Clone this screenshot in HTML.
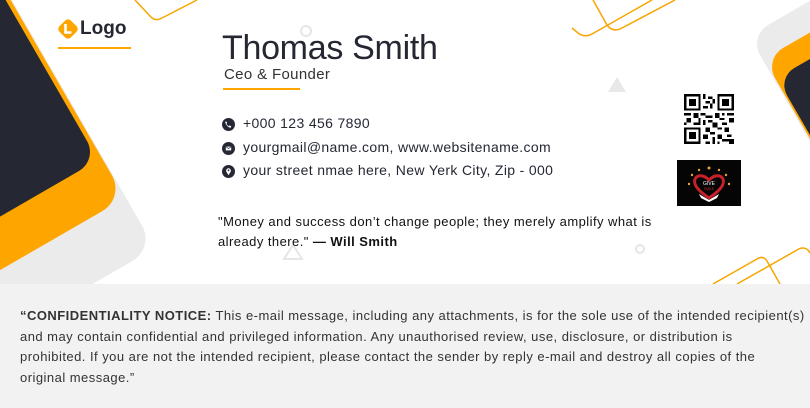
<!DOCTYPE html>
<html><head><meta charset="utf-8"><style>
html,body{margin:0;padding:0;width:810px;height:408px;overflow:hidden;}
body{position:relative;background:#fff;font-family:"Liberation Sans",sans-serif;color:#252733;}
.abs{position:absolute;white-space:nowrap;}
#footer{position:absolute;left:0;top:284px;width:810px;height:124px;background:#f2f2f2;overflow:hidden;}
#footer p{position:absolute;left:20px;top:22px;margin:0;font-size:13px;line-height:20.6px;color:#333;white-space:nowrap;letter-spacing:0.47px;}
.ic{position:absolute;width:13px;height:13px;border-radius:50%;background:#252733;}
</style></head><body>
<svg class="abs" style="left:0;top:0" width="810" height="284">
 <g transform="translate(155,248) rotate(-30)"><rect x="-420" y="-420" width="420" height="420" rx="26" fill="#ebebeb"/></g>
 <g transform="translate(125,198) rotate(-30)"><rect x="-420" y="-420" width="420" height="420" rx="26" fill="#fea500"/></g>
 <g transform="translate(98,160) rotate(-30)"><rect x="-420" y="-420" width="420" height="420" rx="22" fill="#252733"/></g>
 <g transform="translate(749,36) rotate(-30)"><rect x="0" y="0" width="300" height="300" rx="22" fill="#ebebeb"/></g>
 <g transform="translate(764,59) rotate(-30)"><rect x="0" y="0" width="300" height="300" rx="22" fill="#fea500"/></g>
 <g transform="translate(777,78) rotate(-30)"><rect x="0" y="0" width="300" height="300" rx="20" fill="#252733"/></g>
 <g fill="none" stroke="#f7a600" stroke-width="1.5">
  <path d="M135 0 L150 16 Q155 22 162 18 L197 0"/>
  <path d="M572 28 L578 33 Q585 38 592 34 L652 0"/>
  <path d="M593 0 L607 25 Q613 33 622 28 L675 0"/>
  <path d="M713 284 L757 259 Q763 255 767 261 L780 284"/>
  <path d="M737 284 L797 250 Q803 246 808 250 L810 253"/>
 </g>
 <circle cx="306" cy="31" r="5" fill="none" stroke="#e6e6e6" stroke-width="2"/>
 <circle cx="640" cy="249" r="4" fill="none" stroke="#e6e6e6" stroke-width="2"/>
 <polygon points="617,77 608,92 626,92" fill="#e8e8e8"/>
 <polygon points="293,245 284,259 302,259" fill="none" stroke="#e6e6e6" stroke-width="2"/>
</svg>

<svg class="abs" style="left:58px;top:19px" width="20" height="20" viewBox="0 0 20 20"><g transform="rotate(45 10 10)"><rect x="2" y="2" width="16" height="16" rx="4" fill="#fea500"/></g><path d="M7.5 5v8.5h6" fill="none" stroke="#fff" stroke-width="2.6"/></svg>
<div class="abs" style="left:80px;top:18px;font-size:19px;font-weight:bold;">Logo</div>
<div class="abs" style="left:58px;top:47px;width:73px;height:2px;background:#fea500"></div>

<div class="abs" style="left:222px;top:29px;font-size:34px;letter-spacing:-0.3px;">Thomas Smith</div>
<div class="abs" style="left:224px;top:66px;font-size:15px;color:#333;letter-spacing:0.35px;">Ceo &amp; Founder</div>
<div class="abs" style="left:223px;top:88px;width:77px;height:1.5px;background:#fea500"></div>

<div class="ic" style="left:222px;top:118px"></div>
<svg class="abs" style="left:222px;top:118px" width="13" height="13" viewBox="0 0 13 13"><path d="M4 3.3l1.2 1.6-.7 1c.5 1 1.2 1.7 2.2 2.2l1-.7 1.6 1.2-.6 1.2C6.4 9.6 3.5 6.7 3.2 4z" fill="#fff"/></svg>
<div class="abs" style="left:243px;top:115px;font-size:14px;letter-spacing:0.35px;">+000 123 456 7890</div>
<div class="ic" style="left:222px;top:142px"></div>
<svg class="abs" style="left:222px;top:142px" width="13" height="13" viewBox="0 0 13 13"><rect x="3.8" y="4.6" width="5.4" height="3.8" fill="#fff"/><path d="M3.8 4.6l2.7 2 2.7-2" fill="none" stroke="#252733" stroke-width=".7"/></svg>
<div class="abs" style="left:243px;top:139px;font-size:14px;letter-spacing:0.35px;">yourgmail@name.com, www.websitename.com</div>
<div class="ic" style="left:222px;top:165px"></div>
<svg class="abs" style="left:222px;top:165px" width="13" height="13" viewBox="0 0 13 13"><path d="M6.5 10.2L4.3 6.6a2.4 2.4 0 1 1 4.4 0z" fill="#fff"/><circle cx="6.5" cy="5.3" r=".9" fill="#252733"/></svg>
<div class="abs" style="left:243px;top:162px;font-size:14px;letter-spacing:0.35px;">your street nmae here, New Yerk City, Zip - 000</div>

<div class="abs" style="left:218px;top:212px;font-size:13px;line-height:20px;color:#111;letter-spacing:0.45px;">"Money and success don’t change people; they merely amplify what is<br>already there." <b>— Will Smith</b></div>

<svg class="abs" style="left:684px;top:94px" width="50" height="50" viewBox="0 0 21 21" shape-rendering="crispEdges">
 <g fill="#000"><path d="M0 0h7v7H0zM14 0h7v7h-7zM0 14h7v7H0z"/></g>
 <g fill="#fff"><path d="M1 1h5v5H1zM15 1h5v5h-5zM1 15h5v5H1z"/></g>
 <g fill="#000"><path d="M2 2h3v3H2zM16 2h3v3h-3zM2 16h3v3H2z"/>
 <path d="M8 0h1v2H8zM10 1h2v1h-2zM9 3h2v1H9zM11 4h1v2h-1zM8 5h2v1H8zM12 2h1v2h-1zM0 8h3v1H0zM4 8h2v2H4zM1 10h2v2H1zM7 8h2v1H7zM9 9h3v1H9zM13 8h2v2h-2zM16 8h1v1h-1zM18 8h3v1h-3zM15 10h2v1h-2zM19 10h2v2h-2zM8 11h1v2H8zM10 11h2v1h-2zM12 12h2v2h-2zM16 12h2v1h-2zM4 12h3v1H4zM9 14h2v2H9zM11 16h2v1h-2zM14 14h2v1h-2zM17 14h2v2h-2zM8 17h2v2H8zM12 18h1v3h-1zM14 17h2v2h-2zM18 17h2v1h-2zM16 19h3v1h-3zM19 19h2v2h-2zM9 20h2v1H9zM14 20h1v1h-1zM0 12h1v1H0zM6 10h1v2H6z"/></g>
</svg>

<svg class="abs" style="left:677px;top:160px" width="64" height="46" viewBox="0 0 64 46">
 <rect width="64" height="46" fill="#050505"/>
 <g fill="#e8a23a"><circle cx="32" cy="8" r="1.5"/><circle cx="22" cy="10" r="1.2"/><circle cx="42" cy="10" r="1.2"/><circle cx="15" cy="15" r="1.2"/><circle cx="49" cy="15" r="1.2"/><circle cx="12" cy="24" r="1.2"/><circle cx="52" cy="24" r="1.2"/></g>
 <path d="M32 38C20 30 16 24 18 19c2-4 8-5 14 1 6-6 12-5 14-1 2 5-2 11-14 19z" fill="none" stroke="#c8202a" stroke-width="3"/>
 <path d="M22 34q10 6 10 6q0 0 10-6l-2 4q-8 4-8 4q0 0-8-4z" fill="#fff"/>
 <text x="32" y="25" font-size="5" fill="#fff" text-anchor="middle" font-family="Liberation Sans">GIVE</text>
 <text x="32" y="30" font-size="3.5" fill="#c8202a" text-anchor="middle" font-family="Liberation Sans">SMILE</text>
</svg>

<div id="footer"><p><b>“CONFIDENTIALITY NOTICE:</b> This e-mail message, including any attachments, is for the sole use of the intended recipient(s)<br>and may contain confidential and privileged information. Any unauthorised review, use, disclosure, or distribution is<br>prohibited. If you are not the intended recipient, please contact the sender by reply e-mail and destroy all copies of the<br>original message.”</p></div>
</body></html>
